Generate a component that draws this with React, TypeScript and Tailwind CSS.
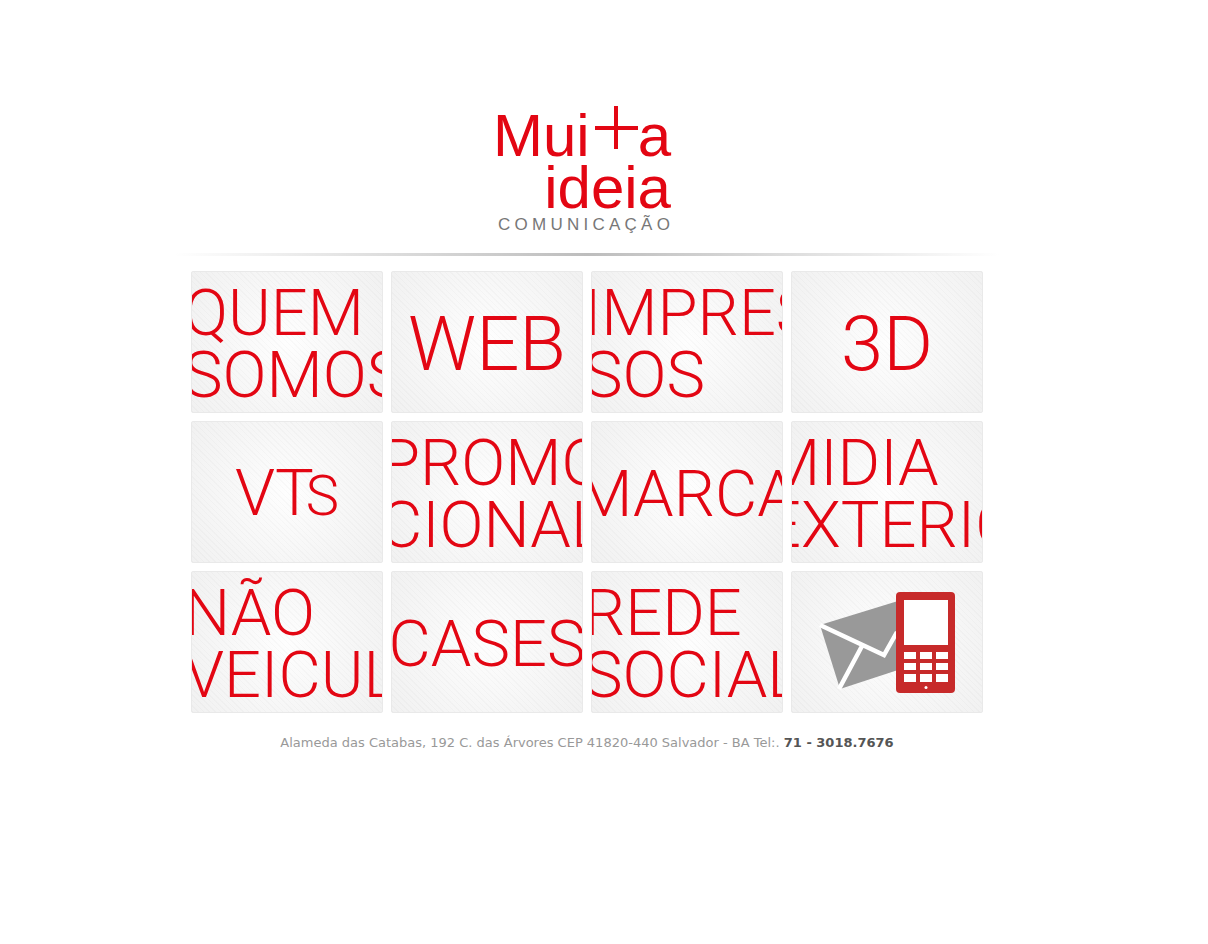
import type { ReactNode } from "react";

const tileClass =
  "flex h-[142px] flex-col justify-center overflow-hidden rounded-xs border border-[#e9e9e9] bg-[repeating-linear-gradient(45deg,rgba(0,0,0,0.02)_0px,rgba(0,0,0,0.02)_1px,transparent_1px,transparent_4px),radial-gradient(circle_at_center,#fefefe_0%,#f6f6f6_60%,#f1f1f1_100%)] pt-1 font-['Roboto',sans-serif] font-light text-[#e30613]";

function Tile({ href, label, children }: { href: string; label?: string; children: ReactNode }) {
  return (
    <a href={href} aria-label={label} className={tileClass}>
      {children}
    </a>
  );
}

const bleeds = { small: "-ml-2", medium: "-ml-3", large: "-ml-7" };

function Wide({ first, second, bleed = "small" }: { first: string; second: string; bleed?: keyof typeof bleeds }) {
  return (
    <span className={`${bleeds[bleed]} block text-[65px] leading-[62px] whitespace-nowrap`}>
      {first}
      <br />
      {second}
    </span>
  );
}

function Single({ children }: { children: ReactNode }) {
  return (
    <span className="flex items-baseline justify-center text-[65px] leading-[62px] whitespace-nowrap">
      {children}
    </span>
  );
}

function Big({ children }: { children: ReactNode }) {
  return <span className="block text-center text-[76px] leading-[76px]">{children}</span>;
}

function Logo() {
  return (
    <svg
      width="180"
      height="132"
      viewBox="0 0 180 132"
      role="img"
      aria-label="Muita ideia comunicação"
      className="font-['Liberation_Sans',Arial,sans-serif]"
    >
      <g fill="#e30613" fontSize="60">
        <text x="-4" y="54">Mui</text>
        <path d="M98 24h43v4H98zM117 4h4v43h-4z" />
        <text x="174" y="54" textAnchor="end">a</text>
        <text x="174" y="106" textAnchor="end">ideia</text>
      </g>
      <text x="1" y="128" fill="#777" fontSize="17" className="tracking-[0.25em]">
        COMUNICAÇÃO
      </text>
    </svg>
  );
}

function ContactIcon() {
  return (
    <svg
      width="134"
      height="104"
      viewBox="0 0 134 104"
      aria-hidden="true"
      className="mx-auto overflow-visible"
    >
      <path d="M0 33 78 9v69L20 97Z" fill="#999" />
      <path d="M0 33 64 63 77 40M42 54 19 97" fill="none" stroke="#fff" strokeWidth="4.500" />
      <rect x="76" y="0" width="59" height="101" rx="4" fill="#c72a2a" />
      <path d="M84 8h44v45H84z" fill="#fff" />
      <path
        d="M84 60h12v7H84zM100 60h12v7h-12zM116 60h12v7h-12zM84 71h12v7H84zM100 71h12v7h-12zM116 71h12v7h-12zM84 82h12v8H84zM100 82h12v8h-12zM116 82h12v8h-12z"
        fill="#fff"
      />
      <circle cx="106" cy="95.500" r="1.500" fill="#fff" />
    </svg>
  );
}

export default function App() {
  return (
    <div className="min-h-screen bg-white">
      <div className="mx-auto max-w-[860px] pr-[34px] pt-[102px]">
        <header className="flex flex-col items-center">
          <h1 className="pb-[19px]">
            <Logo />
          </h1>
        </header>
        <div className="h-[3px] bg-linear-to-r from-transparent via-[#bdbdbd] to-transparent" />
        <main className="grid grid-cols-4 gap-2 px-[17px] pt-[15px]">
          <Tile href="#quem-somos"><Wide first="QUEM" second="SOMOS" /></Tile>
          <Tile href="#web"><Big>WEB</Big></Tile>
          <Tile href="#impressos"><Wide first="IMPRES" second="SOS" /></Tile>
          <Tile href="#3d"><Big>3D</Big></Tile>
          <Tile href="#vts"><Single>VT<span className="-ml-2 text-[56px]">S</span></Single></Tile>
          <Tile href="#promocional"><Wide first="PROMO" second="CIONAL" bleed="medium" /></Tile>
          <Tile href="#marca"><Single>MARCA</Single></Tile>
          <Tile href="#midia-exterior"><Wide first="MIDIA" second="EXTERIO" bleed="large" /></Tile>
          <Tile href="#nao-veiculado"><Wide first="NÃO" second="VEICUL" /></Tile>
          <Tile href="#cases"><Single>CASES</Single></Tile>
          <Tile href="#rede-social"><Wide first="REDE" second="SOCIAL" /></Tile>
          <Tile href="#contato" label="Contato"><ContactIcon /></Tile>
        </main>
        <footer className="pt-5 text-center font-['DejaVu_Sans',sans-serif] text-[13px] leading-5 text-[#999]">
          Alameda das Catabas, 192 C. das Árvores CEP 41820-440 Salvador - BA Tel:.{" "}
          <strong className="text-[#555]">71 - 3018.7676</strong>
        </footer>
      </div>
    </div>
  );
}
